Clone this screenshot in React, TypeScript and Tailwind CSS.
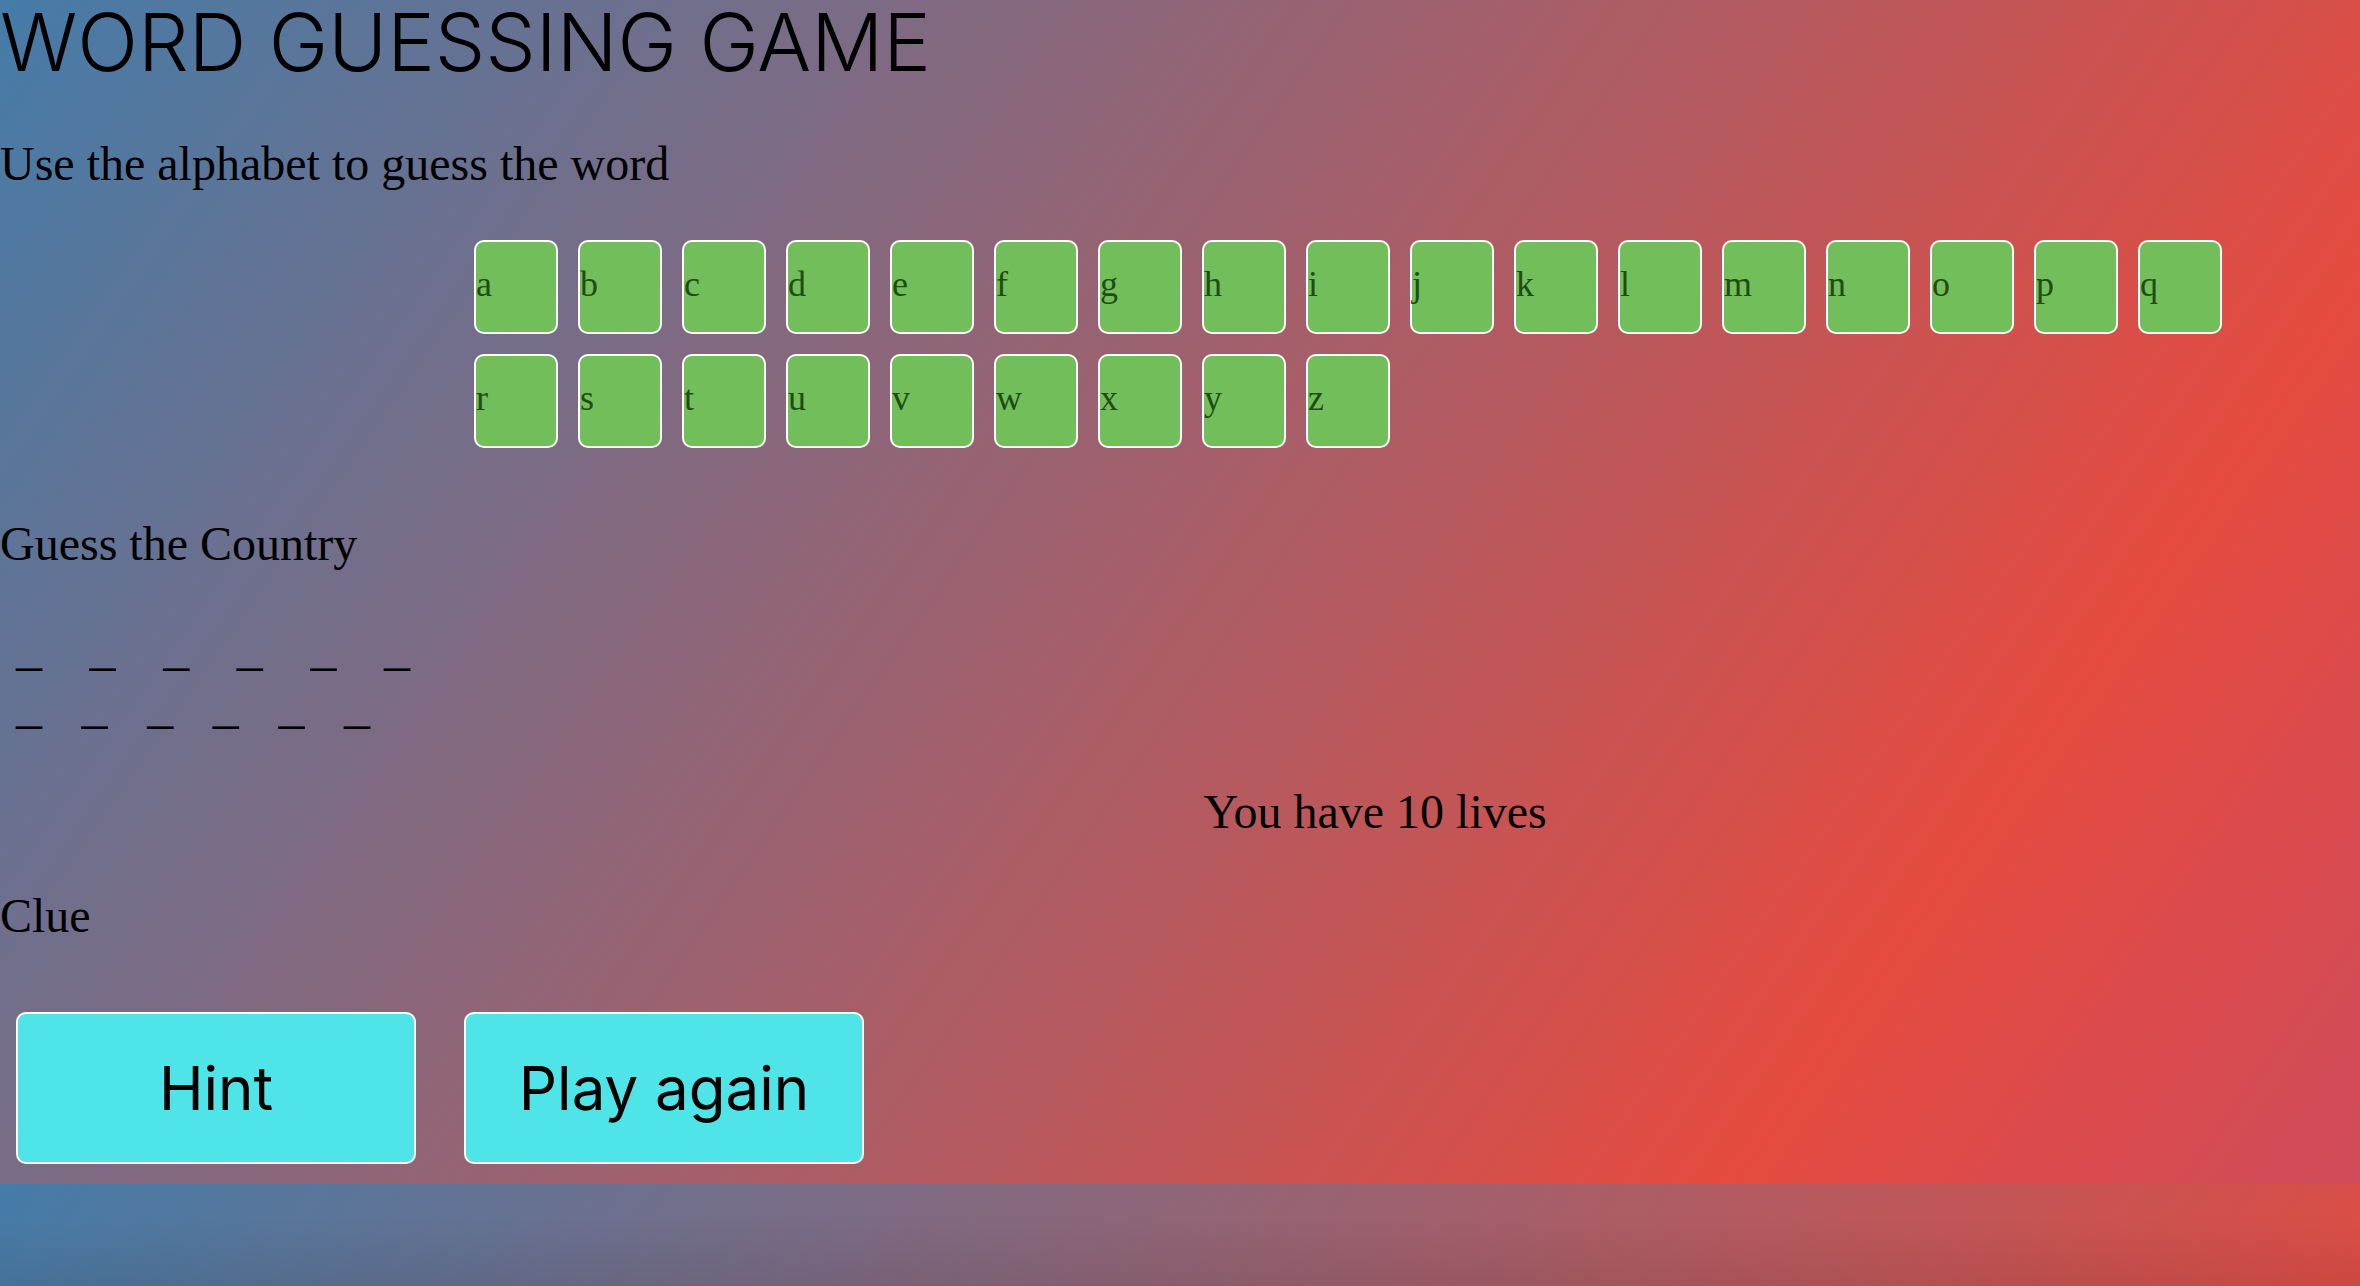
const letters = 'abcdefghijklmnopqrstuvwxyz'.split('');
const blanks = [0, 1, 2, 3, 4, 5];

function Blanks({ className }: { className: string }) {
  return (
    <div className={`ml-4 flex justify-between text-[52px] leading-[58px] ${className}`}>
      {blanks.map((i) => (
        <span key={i}>_</span>
      ))}
    </div>
  );
}

function ActionButton({ label }: { label: string }) {
  return (
    <button
      type="button"
      className="h-[152px] w-[400px] rounded-[10px] border-2 border-white bg-[#4fe4e7] font-['Inter',sans-serif] text-[60px] text-black"
    >
      {label}
    </button>
  );
}

export default function App() {
  return (
    <div className="flex min-h-screen flex-col bg-[linear-gradient(125deg,#457ca8_0%,#e54b40_80%,#d04b5a_100%)] bg-[length:100%_1184px] font-['Liberation_Serif',serif] text-black">
      <main className="pb-5">
        <h1 className="font-['Inter',sans-serif] text-[80px] leading-[84px] font-light">
          WORD GUESSING GAME
        </h1>
        <h2 className="mt-[52px] text-[48px] leading-[56px]">Use the alphabet to guess the word</h2>
        <div className="mt-12 ml-[474px] flex w-3/4 flex-wrap gap-5">
          {letters.map((letter) => (
            <button
              key={letter}
              type="button"
              className="h-[94px] w-[84px] rounded-[10px] border-2 border-white bg-[#71be5a] pb-1.5 text-left text-[36px] text-[#1f4d12]"
            >
              {letter}
            </button>
          ))}
        </div>
        <h2 className="mt-[68px] text-[48px] leading-[56px]">Guess the Country</h2>
        <div className="mt-[46px]">
          <Blanks className="w-[394px]" />
          <Blanks className="w-[354px]" />
        </div>
        <p className="mt-[50px] ml-[51%] text-[48px] leading-[56px]">You have 10 lives</p>
        <h2 className="mt-12 text-[48px] leading-[56px]">Clue</h2>
        <div className="mt-[68px] ml-4 flex gap-12">
          <ActionButton label="Hint" />
          <ActionButton label="Play again" />
        </div>
      </main>
      <div className="min-h-[102px] flex-1 bg-gradient-to-b from-transparent from-30% to-black/8" />
    </div>
  );
}
